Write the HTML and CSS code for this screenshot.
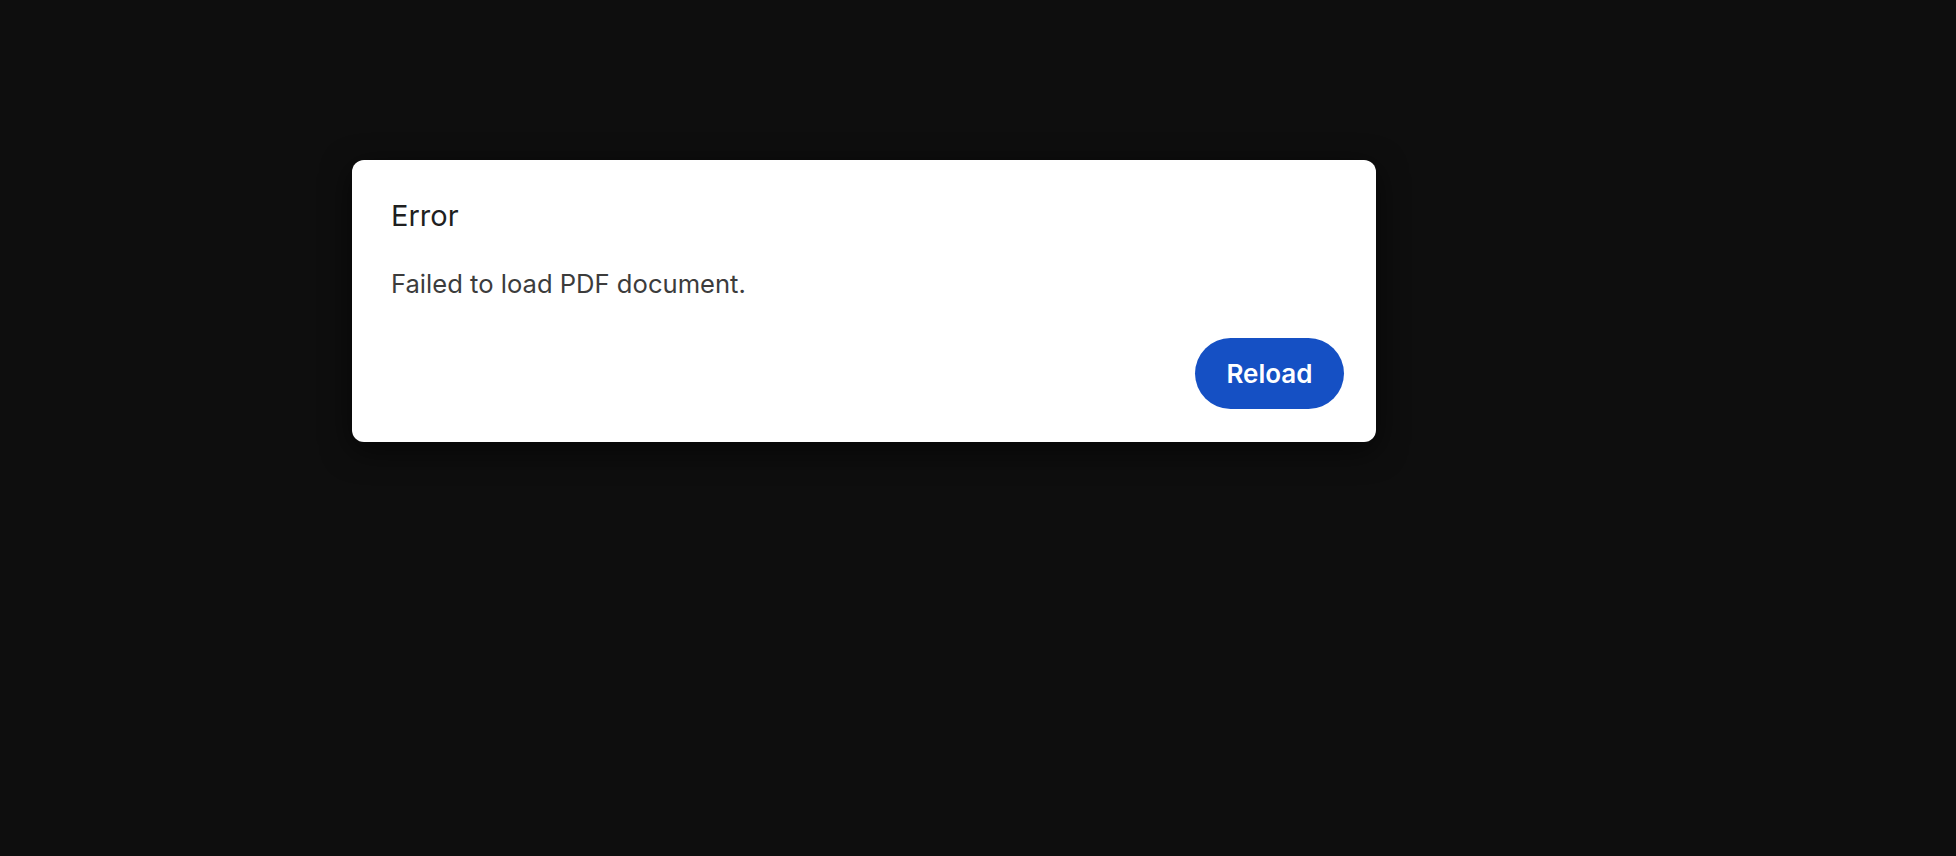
FILE: index.html
```html
<!DOCTYPE html>
<html>
<head>
<meta charset="utf-8">
<link rel="stylesheet" href="styles.css">
</head>
<body>
<div class="page">
  <div class="dialog">
    <div class="title">Error</div>
    <div class="message">Failed to load PDF document.</div>
    <div class="actions">
      <button class="reload">Reload</button>
    </div>
  </div>
</div>
</body>
</html>
```
FILE: styles.css
```css
html, body {
  margin: 0;
  padding: 0;
  background: #0e0e0e;
  height: 100%;
}
.page {
  padding: 160px 0 0 352px;
}
.dialog {
  width: 1024px;
  height: 282px;
  box-sizing: border-box;
  background: #ffffff;
  border-radius: 12px;
  box-shadow: 0 8px 30px rgba(0,0,0,0.6);
  padding: 38px 32px 33px 39px;
  display: flex;
  flex-direction: column;
  font-family: Inter, "Noto Sans", sans-serif;
}
.title {
  font-size: 29px;
  line-height: 36px;
  color: #1f1f1f;
  font-weight: 400;
}
.message {
  margin-top: 35px;
  font-size: 25.6px;
  line-height: 30px;
  color: #3c3c3c;
}
.actions {
  margin-top: auto;
  display: flex;
  justify-content: flex-end;
}
.reload {
  width: 149px;
  height: 71px;
  border: none;
  border-radius: 36px;
  background: #1550c4;
  color: #ffffff;
  font-family: Inter, "Noto Sans", sans-serif;
  font-size: 26px;
  font-weight: 600;
  padding: 0;
}
```
